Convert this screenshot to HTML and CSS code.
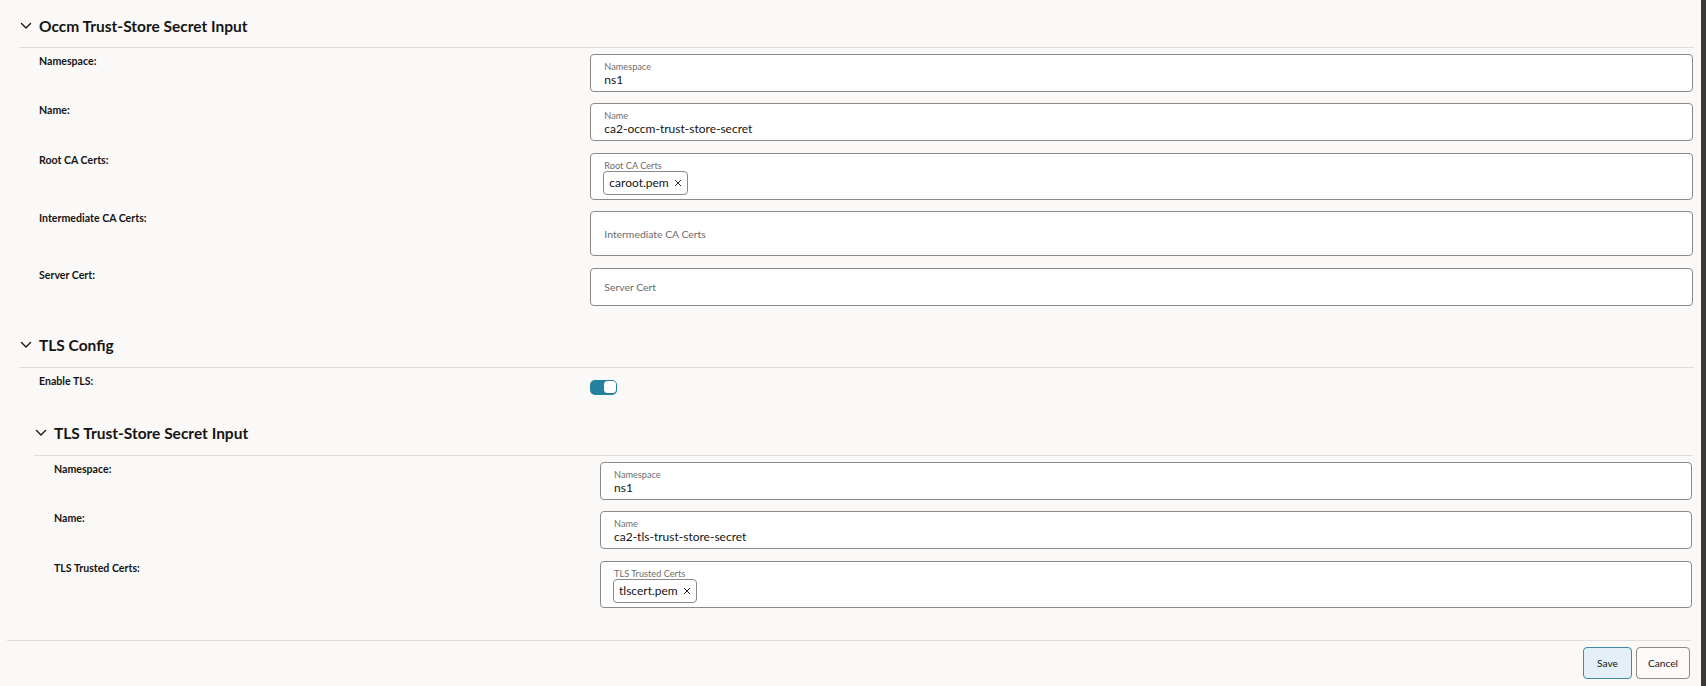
FILE: index.html
```html
<!DOCTYPE html>
<html lang="en">
<head>
<meta charset="utf-8">
<title>Trust-Store Secret Input</title>
<link rel="stylesheet" href="styles.css">
</head>
<body>
<div class="app">
  <main class="main">
    <section class="section">
      <div class="section-header">
        <svg class="chevron" viewBox="0 0 12 8" width="12" height="8"><path d="M1.5 1.5 L6 6 L10.5 1.5" /></svg>
        <h2 class="section-title">Occm Trust-Store Secret Input</h2>
      </div>
      <div class="section-body gap-after">
        <div class="form-row">
          <div class="field-label">Namespace:</div>
          <div class="field-cell">
            <div class="text-field">
              <span class="inside-label">Namespace</span>
              <span class="value">ns1</span>
            </div>
          </div>
        </div>
        <div class="form-row">
          <div class="field-label">Name:</div>
          <div class="field-cell">
            <div class="text-field">
              <span class="inside-label">Name</span>
              <span class="value">ca2-occm-trust-store-secret</span>
            </div>
          </div>
        </div>
        <div class="form-row">
          <div class="field-label">Root CA Certs:</div>
          <div class="field-cell">
            <div class="text-field">
              <span class="inside-label">Root CA Certs</span>
              <div class="chips">
                <span class="chip">caroot.pem<svg class="chip-x" viewBox="0 0 8 8" width="8" height="8"><path d="M1 1 L7 7 M7 1 L1 7"/></svg></span>
              </div>
            </div>
          </div>
        </div>
        <div class="form-row">
          <div class="field-label">Intermediate CA Certs:</div>
          <div class="field-cell">
            <div class="text-field empty tall">
              <span class="placeholder">Intermediate CA Certs</span>
            </div>
          </div>
        </div>
        <div class="form-row">
          <div class="field-label">Server Cert:</div>
          <div class="field-cell">
            <div class="text-field empty">
              <span class="placeholder">Server Cert</span>
            </div>
          </div>
        </div>
      </div>
    </section>

    <section class="section">
      <div class="section-header">
        <svg class="chevron" viewBox="0 0 12 8" width="12" height="8"><path d="M1.5 1.5 L6 6 L10.5 1.5" /></svg>
        <h2 class="section-title">TLS Config</h2>
      </div>
      <div class="section-body">
        <div class="form-row toggle-row">
          <div class="field-label">Enable TLS:</div>
          <div class="field-cell">
            <span class="switch"><span class="switch-knob"></span></span>
          </div>
        </div>

        <section class="section nested">
          <div class="section-header">
            <svg class="chevron" viewBox="0 0 12 8" width="12" height="8"><path d="M1.5 1.5 L6 6 L10.5 1.5" /></svg>
            <h2 class="section-title">TLS Trust-Store Secret Input</h2>
          </div>
          <div class="section-body">
            <div class="form-row">
              <div class="field-label">Namespace:</div>
              <div class="field-cell">
                <div class="text-field">
                  <span class="inside-label">Namespace</span>
                  <span class="value">ns1</span>
                </div>
              </div>
            </div>
            <div class="form-row">
              <div class="field-label">Name:</div>
              <div class="field-cell">
                <div class="text-field">
                  <span class="inside-label">Name</span>
                  <span class="value">ca2-tls-trust-store-secret</span>
                </div>
              </div>
            </div>
            <div class="form-row">
              <div class="field-label">TLS Trusted Certs:</div>
              <div class="field-cell">
                <div class="text-field">
                  <span class="inside-label">TLS Trusted Certs</span>
                  <div class="chips">
                    <span class="chip">tlscert.pem<svg class="chip-x" viewBox="0 0 8 8" width="8" height="8"><path d="M1 1 L7 7 M7 1 L1 7"/></svg></span>
                  </div>
                </div>
              </div>
            </div>
          </div>
        </section>
      </div>
    </section>

    <footer class="footer">
      <button class="btn btn-primary" type="button">Save</button>
      <button class="btn" type="button">Cancel</button>
    </footer>
  </main>
  <div class="edge"></div>
</div>
</body>
</html>
```
FILE: styles.css
```css
* { box-sizing: border-box; }

html, body {
  margin: 0;
  padding: 0;
  height: 100%;
}

body {
  background: #faf9f8;
  color: #161513;
  font-family: Lato, "Liberation Sans", sans-serif;
  overflow: hidden;
}

.app {
  display: flex;
  height: 686px;
}

.main {
  flex: 1;
  display: flex;
  flex-direction: column;
  min-width: 0;
}

.edge {
  width: 5px;
  background: #3a3938;
  flex: none;
}

/* sections */
.section {
  margin: 7px 7px 0 19px;
}

.section + .section {
  margin-top: 0;
}

.section.nested {
  margin: 0 0 0 15px;
}

.section-header {
  height: 41px;
  display: flex;
  align-items: center;
  padding-bottom: 3px;
  border-bottom: 1px solid #e1dfdc;
}

.chevron {
  flex: none;
  margin: 0 7px 0 1px;
  fill: none;
  stroke: #161513;
  stroke-width: 1.4;
  stroke-linecap: round;
  stroke-linejoin: round;
}

.section-title {
  margin: 0;
  font-size: 15.5px;
  font-weight: 700;
  line-height: 20px;
}

.section-body {
  padding: 6px 1px 0 0;
  display: flex;
  flex-direction: column;
  gap: 11.4px;
}

.section-body.gap-after {
  padding-bottom: 21px;
}

/* rows */
.form-row {
  display: grid;
  grid-template-columns: 1fr 2fr;
  padding-left: 20px;
  align-items: start;
}

.field-label {
  font-size: 10.6px;
  font-weight: 700;
  line-height: 14px;
}

.field-cell {
  min-width: 0;
}

.text-field {
  background: #ffffff;
  border: 1px solid #8b8a88;
  border-radius: 4px;
  padding: 6px 13px 4px 13px;
  display: flex;
  flex-direction: column;
  min-height: 38px;
}

.text-field.empty {
  justify-content: center;
  padding: 0 13px;
}

.text-field.tall {
  min-height: 45px;
}

.inside-label {
  font-size: 9.2px;
  line-height: 11px;
  color: #6f6e6c;
}

.value {
  font-size: 12px;
  line-height: 15px;
  color: #161513;
}

.placeholder {
  font-size: 10.4px;
  line-height: 14px;
  color: #6a6967;
  padding-top: 1px;
}

.chips {
  display: flex;
  margin-left: -1px;
}

.chip {
  display: inline-flex;
  align-items: center;
  height: 24px;
  padding: 0 5px;
  border: 1px solid #8b8a88;
  border-radius: 4px;
  font-size: 12px;
  color: #161513;
  gap: 5px;
}

.chip-x {
  fill: none;
  stroke: #2b2a28;
  stroke-width: 1;
  width: 8px;
  height: 8px;
}

/* toggle */
.toggle-row {
  height: 30px;
}

.switch {
  display: flex;
  justify-content: flex-end;
  align-items: center;
  width: 27px;
  height: 15px;
  margin-top: 6px;
  padding: 1px;
  border-radius: 5px;
  background: #23809f;
}

.switch-knob {
  width: 12px;
  height: 12px;
  border-radius: 3.5px;
  background: #ffffff;
}

/* footer */
.footer {
  margin: auto 10px 0 7px;
  border-top: 1px solid #e1dfdc;
  padding: 6px 1px 7px 0;
  display: flex;
  justify-content: flex-end;
  gap: 4px;
}

.btn {
  height: 32px;
  padding: 0 11px;
  font-family: Lato, "Liberation Sans", sans-serif;
  font-size: 10.2px;
  color: #161513;
  background: #fbfaf9;
  border: 1px solid #8b8a88;
  border-radius: 4px;
}

.btn-primary {
  background: #e4f0f6;
  border-color: #3f89a8;
  padding: 0 13px;
}
```
